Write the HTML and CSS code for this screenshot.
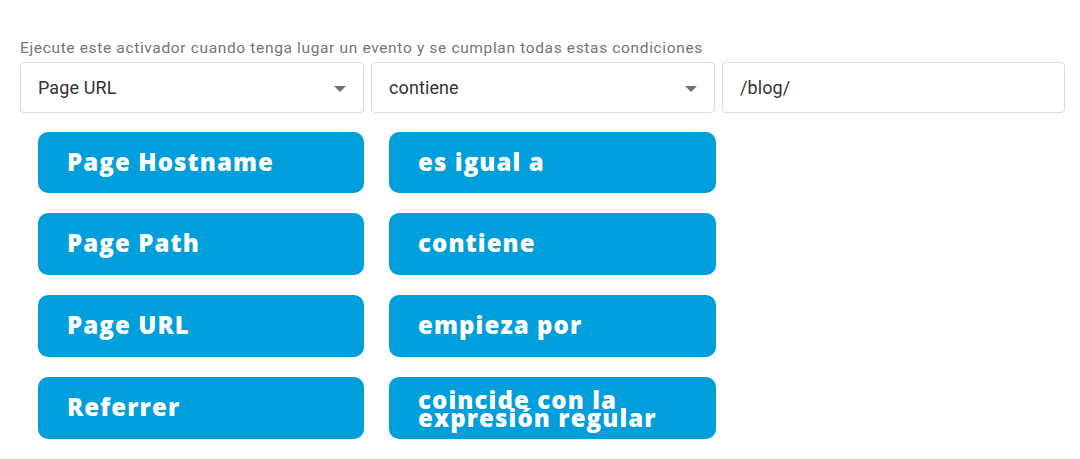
FILE: index.html
```html
<!DOCTYPE html>
<html lang="es">
<head>
<meta charset="utf-8">
<title>Condiciones del activador</title>
<link rel="stylesheet" href="styles.css">
</head>
<body>
<div class="page">
  <p class="hint">Ejecute este activador cuando tenga lugar un evento y se cumplan todas estas condiciones</p>
  <div class="fields">
    <div class="field select"><span>Page URL</span><i class="caret"></i></div>
    <div class="field select"><span>contiene</span><i class="caret"></i></div>
    <div class="field"><span>/blog/</span></div>
  </div>
  <div class="chips">
    <div class="chip">Page Hostname</div>
    <div class="chip">es igual a</div>
    <div class="chip">Page Path</div>
    <div class="chip">contiene</div>
    <div class="chip">Page URL</div>
    <div class="chip">empieza por</div>
    <div class="chip">Referrer</div>
    <div class="chip two">coincide con la<br>expresión regular</div>
  </div>
</div>
</body>
</html>
```
FILE: styles.css
```css
html, body {
  margin: 0;
  padding: 0;
  background: #ffffff;
}
.page {
  width: 1080px;
  height: 459px;
  box-sizing: border-box;
  padding: 38px 0 0 20px;
  font-family: Roboto, "Liberation Sans", sans-serif;
}
.hint {
  margin: 0;
  font-size: 15.5px;
  letter-spacing: 0.65px;
  line-height: 20px;
  color: #757575;
}
.fields {
  display: grid;
  grid-template-columns: 344px 344px 343px;
  column-gap: 7px;
  margin-top: 4px;
}
.field {
  height: 51px;
  box-sizing: border-box;
  border: 1px solid #dadce0;
  border-radius: 4px;
  display: flex;
  align-items: center;
  justify-content: space-between;
  padding: 0 16px 0 17px;
  font-size: 18px;
  letter-spacing: 0.1px;
  color: #333333;
}
.caret {
  width: 0;
  height: 0;
  border-left: 6px solid transparent;
  border-right: 6px solid transparent;
  border-top: 6px solid #707070;
  margin-right: 1px;
  margin-top: 3px;
}
.chips {
  display: grid;
  grid-template-columns: 326px 327px;
  grid-template-rows: 61px 62px 62px 62px;
  column-gap: 25px;
  row-gap: 20px;
  margin: 19px 0 0 18px;
}
.chip {
  background: #009fdb;
  border-radius: 10px;
  color: #ffffff;
  font-family: "Open Sans", Lato, sans-serif;
  font-weight: 800;
  font-size: 24px;
  letter-spacing: 1.1px;
  display: flex;
  align-items: center;
  padding: 0 0 3px 29px;
  box-sizing: border-box;
}
.chip.two {
  line-height: 18px;
  padding-top: 4px;
}
```
